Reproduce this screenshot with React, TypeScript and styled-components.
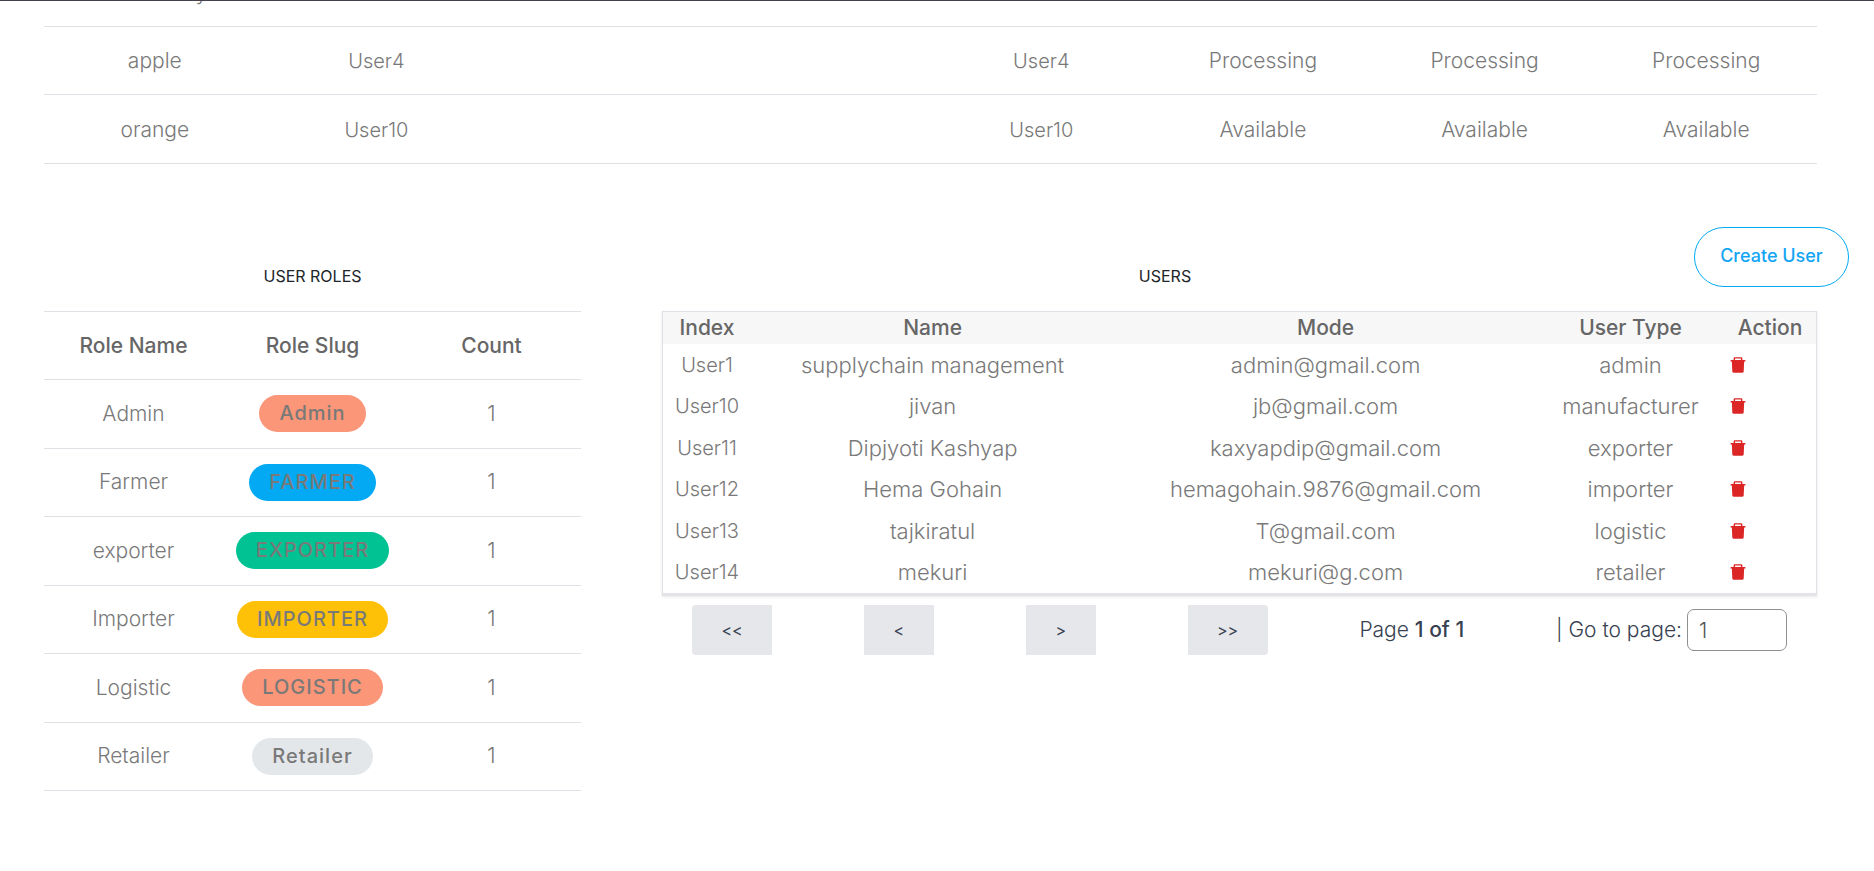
import React, { useState } from "react";
import styled, { createGlobalStyle } from "styled-components";
import { AiFillDelete } from "react-icons/ai";

const GlobalStyle = createGlobalStyle`
  *, *::before, *::after { box-sizing: border-box; }
  body {
    margin: 0;
    background: #fff;
    color: #797979;
    font-family: Inter, "Open Sans", sans-serif;
    font-size: 21px;
    font-weight: 300;
    line-height: 30px;
  }
`;

const Page = styled.div`
  border-top: 1px solid #46414b;
`;

const Main = styled.main`
  padding: 0 57px 64px 44px;
`;

const ScrolledTable = styled.div`
  display: flex;
  flex-direction: column;
  justify-content: flex-end;
  height: 163px;
  overflow: hidden;
`;

const LinedTable = styled.table<{ $height: number }>`
  flex: none;
  width: 100%;
  height: ${(p) => p.$height}px;
  table-layout: fixed;
  border-collapse: separate;
  border-spacing: 0;
  text-align: center;

  th,
  td {
    padding: 0;
    border-bottom: 1px solid #dee2e6;
  }
  thead th {
    height: 69px;
    border-top: 1px solid #dee2e6;
    color: #666;
    font-weight: 500;
  }
`;

const BatchCell = styled.td<{ $id: boolean }>`
  && {
    padding-top: 2px;
    font-size: ${(p) => (p.$id ? 20 : 21)}px;
  }
`;

const Columns = styled.div`
  display: grid;
  grid-template-columns: minmax(0, 537fr) minmax(0, 1155fr);
  column-gap: 81px;
  align-items: start;
  padding-top: 63px;
`;

const PanelHeader = styled.header<{ $bleed?: number }>`
  display: flex;
  align-items: flex-start;
  gap: 26px;
  height: 84px;
  margin-right: -${(p) => p.$bleed ?? 0}px;
`;

const PanelTitle = styled.h2`
  flex: 1;
  margin: 0;
  padding-top: 37px;
  color: #212529;
  font-size: 16px;
  font-weight: 400;
  line-height: 24px;
  text-align: center;
  text-transform: uppercase;
`;

const CreateButton = styled.button`
  width: 155px;
  height: 60px;
  padding: 0 0 2px;
  border: 1px solid #03a9f3;
  border-radius: 30px;
  background: #fff;
  color: #12a5f4;
  font: inherit;
  font-size: 18px;
  font-weight: 500;
  cursor: pointer;
`;

const Pill = styled.span<{ $color: string }>`
  display: inline-block;
  padding: 0 20px;
  border-radius: 19px;
  background: ${(p) => p.$color};
  font-size: 20px;
  font-weight: 500;
  letter-spacing: 1px;
  line-height: 37px;
  vertical-align: middle;
`;

const UsersCard = styled.div`
  border: 1px solid #dee2e6;
  border-bottom: 3px solid #e2e4e8;
  box-shadow: 0 1px 3px rgba(0, 0, 0, 0.1);
`;

const UsersTable = styled.table`
  width: 100%;
  height: 281px;
  table-layout: fixed;
  border-collapse: separate;
  border-spacing: 0;
  text-align: center;

  th,
  td {
    padding: 0;
  }
  th {
    height: 32px;
    background: #f7f7f7;
    color: #666;
    font-weight: 500;
  }
  td {
    font-size: 22px;
  }
  td:first-child {
    font-size: 20px;
  }
`;

const Col = styled.col<{ $width?: string }>`
  width: ${(p) => p.$width ?? "auto"};
`;

const DeleteButton = styled.button`
  display: block;
  margin-left: 4px;
  padding: 0;
  border: 0;
  background: none;
  color: #dc2626;
  font-size: 20px;
  line-height: 0;
  cursor: pointer;
`;

const Pagination = styled.nav`
  display: flex;
  align-items: center;
  justify-content: space-between;
  padding: 9px 30px 0;
  color: #374151;
`;

const PageButton = styled.button<{ $edge?: "left" | "right" }>`
  width: ${(p) => (p.$edge ? 80 : 70)}px;
  height: 50px;
  padding: 0;
  border: 0;
  border-radius: ${(p) =>
    p.$edge === "left" ? "4px 0 0 4px" : p.$edge === "right" ? "0 4px 4px 0" : "0"};
  background: #e5e7eb;
  color: #374151;
  font: inherit;
  font-size: 16px;
  font-weight: 400;
  cursor: pointer;
`;

const PageStatus = styled.span`
  strong {
    font-weight: 500;
  }
`;

const GoTo = styled.label`
  display: flex;
  align-items: center;
  gap: 5px;
`;

const PageInput = styled.input`
  width: 100px;
  height: 42px;
  padding: 0 11px;
  border: 1px solid #8f8f8f;
  border-radius: 7px;
  background: #fff;
  color: #555;
  font: inherit;
`;

const batches = [
  ["strawberry", "", "", "", "", "", "", ""],
  ["apple", "User4", "", "", "User4", "Processing", "Processing", "Processing"],
  ["orange", "User10", "", "", "User10", "Available", "Available", "Available"],
];

const roles = [
  { name: "Admin", slug: "Admin", color: "#fb9678" },
  { name: "Farmer", slug: "FARMER", color: "#03a9f3" },
  { name: "exporter", slug: "EXPORTER", color: "#00c292" },
  { name: "Importer", slug: "IMPORTER", color: "#fec107" },
  { name: "Logistic", slug: "LOGISTIC", color: "#fb9678" },
  { name: "Retailer", slug: "Retailer", color: "#e4e7ea" },
];

const users = [
  ["User1", "supplychain management", "admin@gmail.com", "admin"],
  ["User10", "jivan", "jb@gmail.com", "manufacturer"],
  ["User11", "Dipjyoti Kashyap", "kaxyapdip@gmail.com", "exporter"],
  ["User12", "Hema Gohain", "hemagohain.9876@gmail.com", "importer"],
  ["User13", "tajkiratul", "T@gmail.com", "logistic"],
  ["User14", "mekuri", "mekuri@g.com", "retailer"],
];

function RolesPanel() {
  return (
    <section>
      <PanelHeader>
        <PanelTitle>User Roles</PanelTitle>
      </PanelHeader>
      <LinedTable $height={480}>
        <thead>
          <tr>
            <th>Role Name</th>
            <th>Role Slug</th>
            <th>Count</th>
          </tr>
        </thead>
        <tbody>
          {roles.map((role) => (
            <tr key={role.name}>
              <td>{role.name}</td>
              <td>
                <Pill $color={role.color}>{role.slug}</Pill>
              </td>
              <td>1</td>
            </tr>
          ))}
        </tbody>
      </LinedTable>
    </section>
  );
}

function UsersPanel() {
  const [page, setPage] = useState("1");
  return (
    <section>
      <PanelHeader $bleed={32}>
        <PanelTitle>Users</PanelTitle>
        <CreateButton type="button">Create User</CreateButton>
      </PanelHeader>
      <UsersCard>
        <UsersTable>
          <colgroup>
            <Col $width="88px" />
            <Col $width="31.5%" />
            <Col />
            <Col $width="187px" />
            <Col $width="92px" />
          </colgroup>
          <thead>
            <tr>
              <th>Index</th>
              <th>Name</th>
              <th>Mode</th>
              <th>User Type</th>
              <th>Action</th>
            </tr>
          </thead>
          <tbody>
            {users.map((user) => (
              <tr key={user[0]}>
                {user.map((value) => (
                  <td key={value}>{value}</td>
                ))}
                <td>
                  <DeleteButton type="button" aria-label={`Delete ${user[0]}`}>
                    <AiFillDelete />
                  </DeleteButton>
                </td>
              </tr>
            ))}
          </tbody>
        </UsersTable>
      </UsersCard>
      <Pagination aria-label="Users pages">
        <PageButton type="button" $edge="left">{"<<"}</PageButton>
        <PageButton type="button">{"<"}</PageButton>
        <PageButton type="button">{">"}</PageButton>
        <PageButton type="button" $edge="right">{">>"}</PageButton>
        <PageStatus>
          Page <strong>1 of 1</strong>
        </PageStatus>
        <GoTo>
          | Go to page:
          <PageInput value={page} onChange={(e) => setPage(e.target.value)} />
        </GoTo>
      </Pagination>
    </section>
  );
}

export default function App() {
  return (
    <Page>
      <GlobalStyle />
      <Main>
        <ScrolledTable>
          <LinedTable $height={206}>
            <tbody>
              {batches.map((row) => (
                <tr key={row[0]}>
                  {row.map((value, i) => (
                    <BatchCell key={i} $id={value.startsWith("User")}>
                      {value}
                    </BatchCell>
                  ))}
                </tr>
              ))}
            </tbody>
          </LinedTable>
        </ScrolledTable>
        <Columns>
          <RolesPanel />
          <UsersPanel />
        </Columns>
      </Main>
    </Page>
  );
}
